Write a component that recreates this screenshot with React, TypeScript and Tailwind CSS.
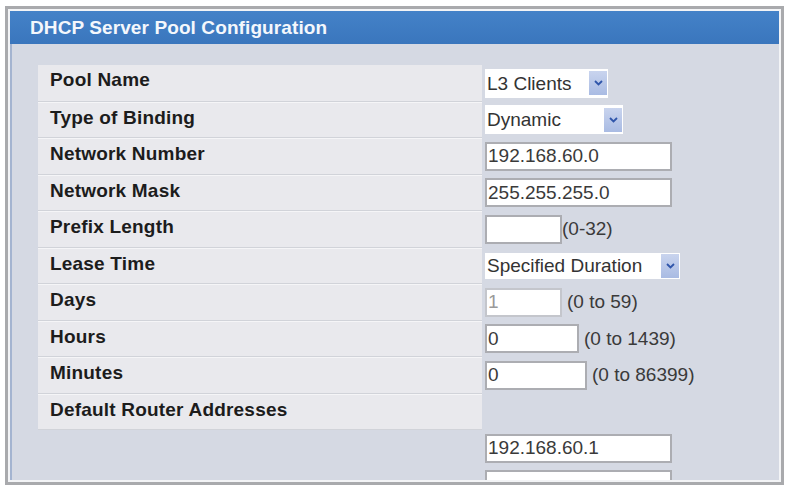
import React from 'react';

type Row = {
    label: string;
    kind?: 'select' | 'input';
    value?: string;
    width?: number;
    hint?: string;
    hintGap?: string;
    disabled?: boolean;
    short?: boolean;
};

const rows: Row[] = [
    { label: 'Pool Name', kind: 'select', value: 'L3 Clients', width: 123 },
    { label: 'Type of Binding', kind: 'select', value: 'Dynamic', width: 138 },
    { label: 'Network Number', kind: 'input', value: '192.168.60.0', width: 187 },
    { label: 'Network Mask', kind: 'input', value: '255.255.255.0', width: 187 },
    { label: 'Prefix Length', kind: 'input', value: '', width: 77, hint: '(0-32)', hintGap: 'ml-0' },
    { label: 'Lease Time', kind: 'select', value: 'Specified Duration', width: 195, short: true },
    { label: 'Days', kind: 'input', value: '1', width: 77, hint: '(0 to 59)', disabled: true },
    { label: 'Hours', kind: 'input', value: '0', width: 94, hint: '(0 to 1439)' },
    { label: 'Minutes', kind: 'input', value: '0', width: 102, hint: '(0 to 86399)' },
    { label: 'Default Router Addresses' },
];

const routers = ['192.168.60.1', ''];

const FakeSelect = ({ value, width, short }: { value: string, width: number, short?: boolean }) => (
    <div className={`flex items-center justify-between bg-white ${short ? 'h-[26px]' : 'h-[29px]'}`} style={{ width }}>
        <span className="pl-[2px] text-[19px] text-[#333] leading-none">{value}</span>
        <span className="flex h-[24px] w-[18px] items-center justify-center mr-[1px] bg-gradient-to-b from-[#c9d4ee] to-[#a9bbe3]">
            <svg width="9" height="6" viewBox="0 0 9 6">
                <path d="M1 1 L4.5 4.5 L8 1" fill="none" stroke="#2f55aa" strokeWidth="1.8" />
            </svg>
        </span>
    </div>
);

const Field = ({ value, width, disabled }: { value: string, width: number, disabled?: boolean }) => (
    <input readOnly value={value}
        className={`h-[29px] border-2 bg-white pl-[1px] text-[19px] outline-none ${disabled ? 'border-[#c4c6cc] text-[#9a9a9a]' : 'border-[#acadb2] text-[#3a3a3a]'}`}
        style={{ width }} />
);

const App = () => {
    return (
        <div className="min-h-screen bg-white pl-[5px] pt-[6px] font-['Liberation_Sans',Arial,sans-serif]">
            <div className="flex h-[479px] w-[779px] flex-col border-[3px] border-[#a9aaad]">
                <div className="flex h-full flex-col border-2 border-[#f3f4f6]">

                    <div className="h-[33px] shrink-0 bg-gradient-to-b from-[#4482c8] to-[#3a76bd] pl-[20px] pt-[6px]">
                        <span className="text-[19px] font-bold leading-[22px] tracking-[0.1px] text-[#f4f7fc]">DHCP Server Pool Configuration</span>
                    </div>

                    <div className="flex-1 overflow-hidden border-l-2 border-[#a4b4d0] bg-[#d5d9e3] pl-[26px] pt-[21px]">
                        {rows.map((r, i) => (
                            <div key={r.label} className="flex h-[36.5px]">
                                <div className={`flex w-[444px] items-start bg-[#e9e9ed] pl-[12px] pt-[4px] border-b border-[#d1d3d9] ${i > 0 ? 'border-t border-t-[#f5f5f7]' : ''}`}>
                                    <span className="text-[19px] font-bold leading-[22px] tracking-[0.2px] text-[#1c1c1c]">{r.label}</span>
                                </div>
                                <div className="flex items-center pl-[3px]">
                                    {r.kind === 'select' && <FakeSelect value={r.value!} width={r.width!} short={r.short} />}
                                    {r.kind === 'input' && <Field value={r.value!} width={r.width!} disabled={r.disabled} />}
                                    {r.hint && (
                                        <span className={`${r.hintGap ?? 'ml-[5px]'} text-[19px] text-[#3a3a3a]`}>{r.hint}</span>
                                    )}
                                </div>
                            </div>
                        ))}

                        {routers.map((addr, i) => (
                            <div key={i} className="flex h-[36.5px]">
                                <div className="w-[444px]" />
                                <div className="flex items-center pl-[3px]">
                                    <Field value={addr} width={187} />
                                </div>
                            </div>
                        ))}
                    </div>

                </div>
            </div>
        </div>
    )
}

export default App
